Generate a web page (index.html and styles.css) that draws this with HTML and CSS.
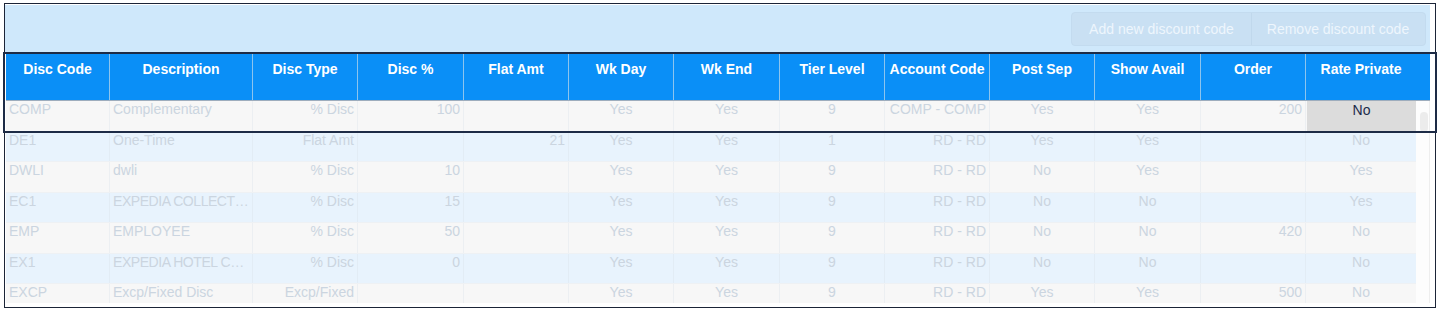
FILE: index.html
```html
<!DOCTYPE html>
<html>
<head>
<meta charset="utf-8">
<link rel="stylesheet" href="styles.css">
</head>
<body>
<div class="frame">
  <div class="toolbar">
    <div class="btn-group">
      <button class="btn">Add new discount code</button>
      <button class="btn">Remove discount code</button>
    </div>
  </div>
  <div class="table">
    <div class="head">
      <div class="hc">Disc Code</div>
      <div class="hc">Description</div>
      <div class="hc">Disc Type</div>
      <div class="hc">Disc %</div>
      <div class="hc">Flat Amt</div>
      <div class="hc">Wk Day</div>
      <div class="hc">Wk End</div>
      <div class="hc">Tier Level</div>
      <div class="hc">Account Code</div>
      <div class="hc">Post Sep</div>
      <div class="hc">Show Avail</div>
      <div class="hc">Order</div>
      <div class="hc">Rate Private</div>
      <div class="hc filler"></div>
    </div>
    <div class="body-wrap">
      <div class="rows">
        <div class="row odd">
          <div class="c l">COMP</div><div class="c l">Complementary</div><div class="c r">% Disc</div><div class="c r">100</div><div class="c r"></div><div class="c m">Yes</div><div class="c m">Yes</div><div class="c m">9</div><div class="c r">COMP - COMP</div><div class="c m">Yes</div><div class="c m">Yes</div><div class="c r">200</div><div class="c m sel">No</div>
        </div>
        <div class="row even">
          <div class="c l">DE1</div><div class="c l">One-Time</div><div class="c r">Flat Amt</div><div class="c r"></div><div class="c r">21</div><div class="c m">Yes</div><div class="c m">Yes</div><div class="c m">1</div><div class="c r">RD - RD</div><div class="c m">Yes</div><div class="c m">Yes</div><div class="c r"></div><div class="c m">No</div>
        </div>
        <div class="row odd">
          <div class="c l">DWLI</div><div class="c l">dwli</div><div class="c r">% Disc</div><div class="c r">10</div><div class="c r"></div><div class="c m">Yes</div><div class="c m">Yes</div><div class="c m">9</div><div class="c r">RD - RD</div><div class="c m">No</div><div class="c m">Yes</div><div class="c r"></div><div class="c m">Yes</div>
        </div>
        <div class="row even">
          <div class="c l">EC1</div><div class="c l tight">EXPEDIA COLLECT…</div><div class="c r">% Disc</div><div class="c r">15</div><div class="c r"></div><div class="c m">Yes</div><div class="c m">Yes</div><div class="c m">9</div><div class="c r">RD - RD</div><div class="c m">No</div><div class="c m">No</div><div class="c r"></div><div class="c m">Yes</div>
        </div>
        <div class="row odd">
          <div class="c l">EMP</div><div class="c l">EMPLOYEE</div><div class="c r">% Disc</div><div class="c r">50</div><div class="c r"></div><div class="c m">Yes</div><div class="c m">Yes</div><div class="c m">9</div><div class="c r">RD - RD</div><div class="c m">No</div><div class="c m">No</div><div class="c r">420</div><div class="c m">No</div>
        </div>
        <div class="row even">
          <div class="c l">EX1</div><div class="c l tight">EXPEDIA HOTEL C…</div><div class="c r">% Disc</div><div class="c r">0</div><div class="c r"></div><div class="c m">Yes</div><div class="c m">Yes</div><div class="c m">9</div><div class="c r">RD - RD</div><div class="c m">No</div><div class="c m">No</div><div class="c r"></div><div class="c m">No</div>
        </div>
        <div class="row odd">
          <div class="c l">EXCP</div><div class="c l">Excp/Fixed Disc</div><div class="c r">Excp/Fixed</div><div class="c r"></div><div class="c r"></div><div class="c m">Yes</div><div class="c m">Yes</div><div class="c m">9</div><div class="c r">RD - RD</div><div class="c m">Yes</div><div class="c m">Yes</div><div class="c r">500</div><div class="c m">No</div>
        </div>
      </div>
      <div class="scrollbar"><div class="thumb"></div></div>
    </div>
  </div>
</div>
<div class="highlight"></div>
</body>
</html>
```
FILE: styles.css
```css
* { box-sizing: border-box; }
html, body { margin: 0; padding: 0; background: #ffffff; }
body {
  width: 1439px;
  height: 310px;
  position: relative;
  overflow: hidden;
  font-family: "Liberation Sans", Arial, Helvetica, sans-serif;
  font-size: 14px;
}
.frame {
  margin: 3px 0 0 4px;
  width: 1432px;
  height: 305px;
  border: 1px solid #1b2437;
  padding: 1px 5px 0 0;
  background: #ffffff;
  display: flex;
  flex-direction: column;
}
.toolbar {
  height: 48px;
  background: #cfe8fb;
  display: flex;
  justify-content: flex-end;
  align-items: flex-start;
  padding: 7px 4px 0 0;
}
.btn-group {
  display: flex;
  height: 34px;
  border: 1px solid #c3dbef;
  border-radius: 4px;
  background: #c9e0f3;
  overflow: hidden;
}
.btn {
  font-family: "Liberation Sans", Arial, Helvetica, sans-serif;
  font-size: 14px;
  color: #eef6fd;
  background: transparent;
  border: 0;
  padding: 0 13px 0 13px;
  height: 100%;
  line-height: 32px;
}
.btn + .btn { border-left: 1px solid #c0d8ec; padding: 0 13px 0 12px; }
.btn:first-child { width: 179px; }
.btn:last-child { width: 174px; }
.table {
  margin-left: 1px;
  display: flex;
  flex-direction: column;
  flex: 1;
  min-height: 0;
}
.head {
  display: grid;
  grid-template-columns: 104px 143px 105px 106px 105px 105px 106px 105px 105px 105px 106px 105px 110px 15px;
  height: 48px;
  background: #0a8ff7;
  border-bottom: 1px solid #9eadbd;
}
.hc {
  color: #ffffff;
  font-weight: bold;
  text-align: center;
  padding-top: 8px;
  line-height: 17px;
  border-right: 1px solid #8cc4ee;
  white-space: nowrap;
}
.hc:nth-child(13), .hc.filler { border-right: 0; }
.body-wrap {
  display: flex;
  height: 202px;
  overflow: hidden;
}
.rows {
  width: 1410px;
  display: flex;
  flex-direction: column;
}
.row {
  display: grid;
  grid-template-columns: 104px 143px 105px 106px 105px 105px 106px 105px 105px 105px 106px 105px 110px;
  height: 30.5px;
  flex: none;
  border-bottom: 1px solid #eef1f4;
}
.row.odd { background: #f7f7f7; }
.row.even { background: #e8f3fd; }
.c {
  color: #cbd5e0;
  line-height: 17px;
  padding: 0 3px 0 3px;
  border-right: 1px solid #eceff2;
  white-space: nowrap;
}
.c.tight { letter-spacing: -0.45px; }
.row.even .c { border-right-color: #e2ecf5; }
.c:last-child { border-right: 0; }
.c.l { text-align: left; }
.c.r { text-align: right; }
.c.m { text-align: center; }
.c.sel {
  background: #dcdcdc;
  color: #1b2b4b;
  margin-left: 1px;
  padding-top: 1px;
}
.scrollbar {
  width: 15px;
  background: #fdfdfd;
  border-right: 1px solid #eeeeee;
  padding: 11px 0 0 4px;
}
.thumb {
  width: 8px;
  height: 20px;
  border-radius: 4px;
  background: #ececec;
}
.highlight {
  position: absolute;
  left: 3px;
  top: 52px;
  width: 1434px;
  height: 81px;
  border: 2px solid #1d2b46;
  pointer-events: none;
}
```
